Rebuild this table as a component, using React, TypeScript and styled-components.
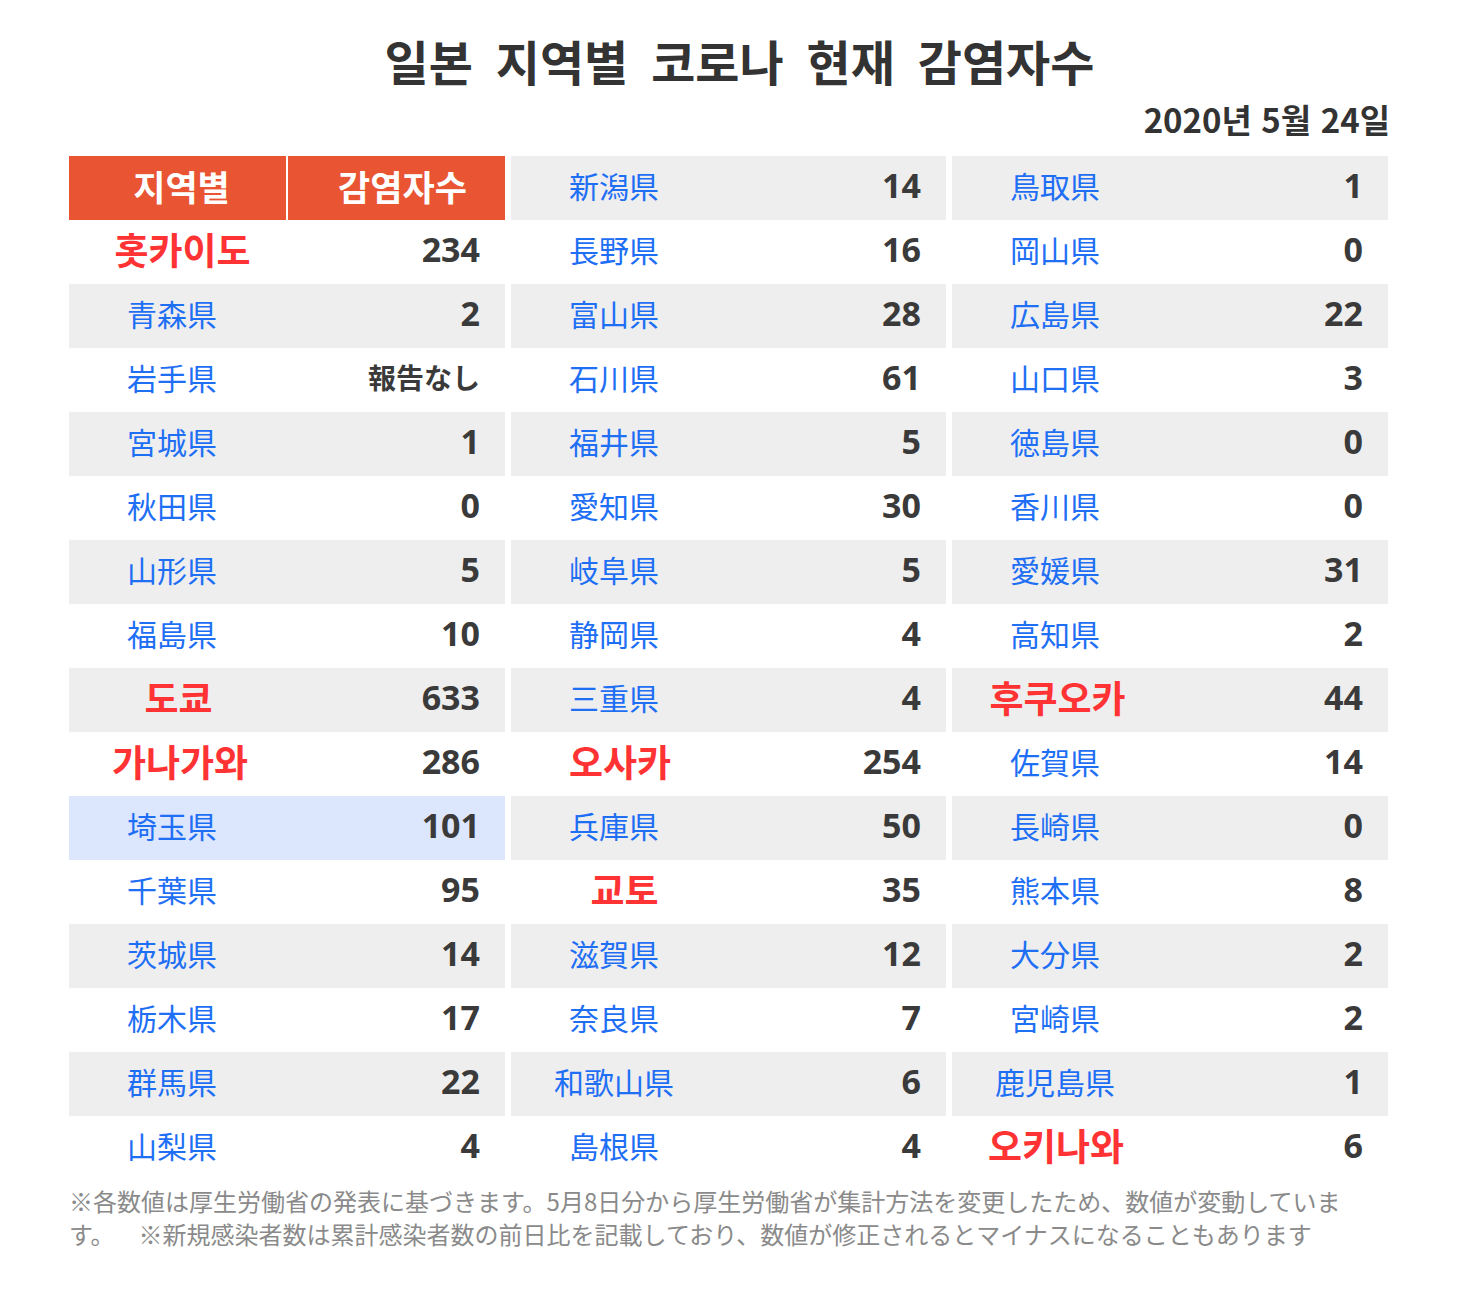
import React from "react";
import styled, { createGlobalStyle } from "styled-components";

const GlobalStyle = createGlobalStyle`
  html, body { margin: 0; padding: 0; background: #ffffff; }
  body { font-family: "Noto Sans CJK KR", "Noto Sans", sans-serif; }
`;

const Page = styled.div`
  width: 1319px;
  margin-left: 69px;
  padding-top: 32px;
  padding-bottom: 40px;
`;

const Title = styled.h1`
  margin: 0;
  padding-left: 22px;
  text-align: center;
  font-family: "Noto Sans CJK KR", sans-serif;
  font-weight: 700;
  font-size: 48px;
  line-height: 56px;
  word-spacing: 12px;
  color: #333333;
`;

const DateLine = styled.div`
  margin-top: 11px;
  text-align: right;
  font-family: "Noto Sans CJK KR", sans-serif;
  font-weight: 700;
  font-size: 33px;
  line-height: 40px;
  word-spacing: 2px;
  color: #333333;
  margin-right: -2px;
`;

const Table = styled.div`
  margin-top: 17px;
  display: grid;
  grid-template-columns: 436px 435px 436px;
  column-gap: 6px;
`;

const Block = styled.div`
  display: flex;
  flex-direction: column;
`;

type Tone = "white" | "gray" | "blue";

const toneBg: Record<Tone, string> = {
  white: "#ffffff",
  gray: "#eeeeee",
  blue: "#dce6fd",
};

const Row = styled.div<{ $tone: Tone }>`
  height: 64px;
  box-sizing: border-box;
  padding-bottom: 7px;
  display: grid;
  grid-template-columns: 208px 1fr;
  align-items: center;
  background: ${(p) => toneBg[p.$tone]};
`;

const HeadRow = styled.div`
  height: 64px;
  display: grid;
  grid-template-columns: 217px 217px;
  column-gap: 2px;
  background: #ffffff;
`;

const HeadCell = styled.div<{ $shift: number }>`
  background: #e95532;
  color: #ffffff;
  display: flex;
  align-items: center;
  justify-content: center;
  box-sizing: border-box;
  padding-left: ${(p) => p.$shift}px;
  padding-bottom: 6px;
  font-family: "Noto Sans CJK KR", sans-serif;
  font-weight: 700;
  font-size: 35px;
`;

const PrefName = styled.div`
  text-align: center;
  padding-right: 2px;
  font-family: "Noto Sans CJK JP", sans-serif;
  font-weight: 400;
  font-size: 30px;
  color: #1f6ff5;
  white-space: nowrap;
`;

const KoName = styled.div<{ $shift: number }>`
  text-align: center;
  padding-left: ${(p) => p.$shift}px;
  font-family: "Noto Sans CJK KR", sans-serif;
  font-weight: 700;
  font-size: 37px;
  color: #ff3333;
  white-space: nowrap;
`;

const Count = styled.div<{ $small?: boolean }>`
  text-align: right;
  padding-right: 25px;
  font-family: ${(p) => (p.$small ? '"Noto Sans CJK JP", sans-serif' : '"Open Sans", "Noto Sans", sans-serif')};
  font-weight: 700;
  font-size: ${(p) => (p.$small ? "28px" : "34px")};
  color: #3a3a3a;
  white-space: nowrap;
`;

const Note = styled.p`
  margin: 4px 0 0 0;
  width: 1300px;
  font-family: "Noto Sans CJK JP", sans-serif;
  font-weight: 400;
  font-size: 24px;
  line-height: 33px;
  color: #8a8a8a;
`;

const NOTE_TEXT =
  "※各数値は厚生労働省の発表に基づきます。5月8日分から厚生労働省が集計方法を変更したため、数値が変動しています。\u3000\u2002※新規感染者数は累計感染者数の前日比を記載しており、数値が修正されるとマイナスになることもあります";

type Entry = { name: string; count: string; ko?: boolean; shift?: number; blue?: boolean };

const block1: Entry[] = [
  { name: "홋카이도", count: "234", ko: true, shift: 19 },
  { name: "青森県", count: "2" },
  { name: "岩手県", count: "報告なし" },
  { name: "宮城県", count: "1" },
  { name: "秋田県", count: "0" },
  { name: "山形県", count: "5" },
  { name: "福島県", count: "10" },
  { name: "도쿄", count: "633", ko: true, shift: 11 },
  { name: "가나가와", count: "286", ko: true, shift: 14 },
  { name: "埼玉県", count: "101", blue: true },
  { name: "千葉県", count: "95" },
  { name: "茨城県", count: "14" },
  { name: "栃木県", count: "17" },
  { name: "群馬県", count: "22" },
  { name: "山梨県", count: "4" },
];

const block2: Entry[] = [
  { name: "新潟県", count: "14" },
  { name: "長野県", count: "16" },
  { name: "富山県", count: "28" },
  { name: "石川県", count: "61" },
  { name: "福井県", count: "5" },
  { name: "愛知県", count: "30" },
  { name: "岐阜県", count: "5" },
  { name: "静岡県", count: "4" },
  { name: "三重県", count: "4" },
  { name: "오사카", count: "254", ko: true, shift: 10 },
  { name: "兵庫県", count: "50" },
  { name: "교토", count: "35", ko: true, shift: 19 },
  { name: "滋賀県", count: "12" },
  { name: "奈良県", count: "7" },
  { name: "和歌山県", count: "6" },
  { name: "島根県", count: "4" },
];

const block3: Entry[] = [
  { name: "鳥取県", count: "1" },
  { name: "岡山県", count: "0" },
  { name: "広島県", count: "22" },
  { name: "山口県", count: "3" },
  { name: "徳島県", count: "0" },
  { name: "香川県", count: "0" },
  { name: "愛媛県", count: "31" },
  { name: "高知県", count: "2" },
  { name: "후쿠오카", count: "44", ko: true, shift: 3 },
  { name: "佐賀県", count: "14" },
  { name: "長崎県", count: "0" },
  { name: "熊本県", count: "8" },
  { name: "大分県", count: "2" },
  { name: "宮崎県", count: "2" },
  { name: "鹿児島県", count: "1" },
  { name: "오키나와", count: "6", ko: true, shift: 0 },
];

function DataRow({ e, index }: { e: Entry; index: number }) {
  const tone: Tone = e.blue ? "blue" : index % 2 === 0 ? "gray" : "white";
  return (
    <Row $tone={tone}>
      {e.ko ? <KoName $shift={e.shift ?? 0}>{e.name}</KoName> : <PrefName>{e.name}</PrefName>}
      <Count $small={!/^\d+$/.test(e.count)}>{e.count}</Count>
    </Row>
  );
}

export default function App() {
  return (
    <>
      <GlobalStyle />
      <Page>
        <Title>일본 지역별 코로나 현재 감염자수</Title>
        <DateLine>2020년 5월 24일</DateLine>
        <Table>
          <Block>
            <HeadRow>
              <HeadCell $shift={8}>지역별</HeadCell>
              <HeadCell $shift={12}>감염자수</HeadCell>
            </HeadRow>
            {block1.map((e, i) => (
              <DataRow key={e.name} e={e} index={i + 1} />
            ))}
          </Block>
          <Block>
            {block2.map((e, i) => (
              <DataRow key={e.name} e={e} index={i} />
            ))}
          </Block>
          <Block>
            {block3.map((e, i) => (
              <DataRow key={e.name} e={e} index={i} />
            ))}
          </Block>
        </Table>
        <Note>{NOTE_TEXT}</Note>
      </Page>
    </>
  );
}
